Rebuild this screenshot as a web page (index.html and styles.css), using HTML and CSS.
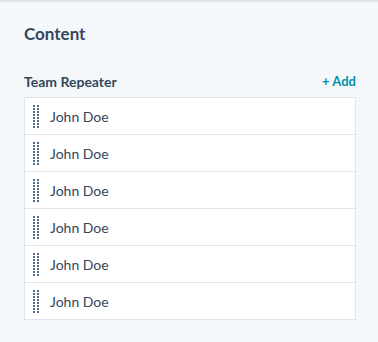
FILE: index.html
```html
<!DOCTYPE html>
<html lang="en">
<head>
    <meta charset="UTF-8">
    <meta name="viewport" content="width=device-width, initial-scale=1.0">
    <title>Content</title>
    <link rel="stylesheet" href="styles.css">
</head>
<body>
    <div class="panel">
        <h2 class="panel-title">Content</h2>

        <div class="field-head">
            <span class="field-label">Team Repeater</span>
            <a href="#" class="add-link">+ Add</a>
        </div>

        <ul class="repeater">
            <li class="repeater-item"><span class="handle"></span>John Doe</li>
            <li class="repeater-item"><span class="handle"></span>John Doe</li>
            <li class="repeater-item"><span class="handle"></span>John Doe</li>
            <li class="repeater-item"><span class="handle"></span>John Doe</li>
            <li class="repeater-item"><span class="handle"></span>John Doe</li>
            <li class="repeater-item"><span class="handle"></span>John Doe</li>
        </ul>
    </div>
</body>
</html>
```

FILE: styles.css
```css
html, body {
    margin: 0;
    padding: 0;
    background: #f5f8fa;
}

body {
    font-family: 'Lato', 'Noto Sans', sans-serif;
    color: #33475b;
    height: 342px;
    border-top: 2px solid #dfe3eb;
    box-sizing: border-box;
}

.panel {
    padding: 22px 22px 0 24px;
}

.panel-title {
    margin: 0;
    font-size: 17px;
    font-weight: 700;
    line-height: 20px;
}

.field-head {
    display: flex;
    justify-content: space-between;
    align-items: center;
    margin-top: 27px;
    height: 20px;
}

.field-label {
    font-size: 14px;
    font-weight: 700;
}

.add-link {
    color: #0091ae;
    font-size: 13px;
    font-weight: 700;
    text-decoration: none;
}

.repeater {
    list-style: none;
    margin: 6px 0 0;
    padding: 0;
    background: #fff;
    border: 1px solid #dfe3eb;
}

.repeater-item {
    display: flex;
    align-items: center;
    height: 36px;
    padding-left: 8px;
    font-size: 14px;
    border-top: 1px solid #dfe3eb;
}

.repeater-item:first-child {
    border-top: none;
}

/* drag handle: 2 columns of dots */
.handle {
    width: 6px;
    height: 23px;
    margin-right: 11px;
    background-image: repeating-linear-gradient(to bottom, #516f90 0 2px, transparent 2px 3px);
    -webkit-mask: repeating-linear-gradient(to right, #000 0 2px, transparent 2px 4px);
    mask: repeating-linear-gradient(to right, #000 0 2px, transparent 2px 4px);
}
```
